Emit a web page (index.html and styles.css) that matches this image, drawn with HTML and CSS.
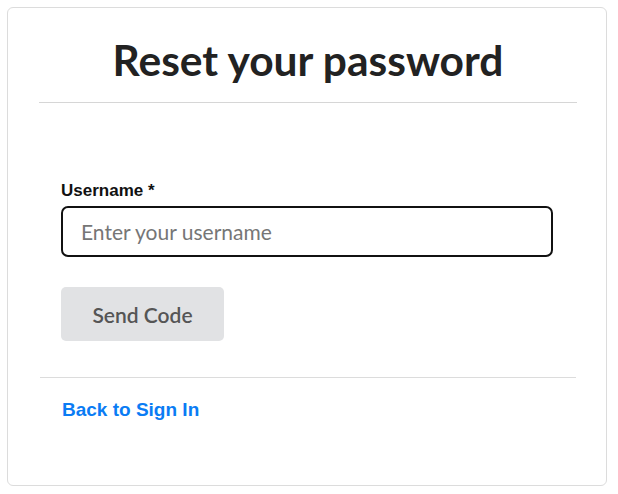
FILE: index.html
```html
<!DOCTYPE html>
<html lang="en">
<head>
<meta charset="utf-8">
<title>Reset your password</title>
<link rel="stylesheet" href="styles.css">
</head>
<body>
<div class="card">
  <div class="card-header">
    <h1 class="title">Reset your password</h1>
  </div>
  <form class="form">
    <label class="label" for="username">Username *</label>
    <input class="input" id="username" type="text" placeholder="Enter your username">
    <button class="button" type="button">Send Code</button>
  </form>
  <div class="card-footer">
    <a class="link" href="#">Back to Sign In</a>
  </div>
</div>
</body>
</html>
```
FILE: styles.css
```css
html, body {
  margin: 0;
  padding: 0;
  background: #ffffff;
}
body {
  padding: 7px;
}
.card {
  box-sizing: border-box;
  width: 600px;
  height: 479px;
  border: 1px solid #dcdcdc;
  border-radius: 6px;
  background: #fff;
  display: flex;
  flex-direction: column;
}
.card-header {
  margin: 0 29px 0 31px;
  padding-top: 28px;
  padding-bottom: 18px;
  border-bottom: 1px solid #d6d6d6;
}
.title {
  margin: 0;
  font-family: Lato, "Noto Sans", sans-serif;
  font-weight: 700;
  font-size: 42.5px;
  line-height: 48px;
  color: #222222;
  text-align: center;
}
.form {
  display: flex;
  flex-direction: column;
  align-items: flex-start;
  margin: 0 30px 0 32px;
  padding: 78px 22px 36px 21px;
  border-bottom: 1px solid #dcdcdc;
}
.label {
  font-family: "Liberation Sans", Arial, sans-serif;
  font-weight: 700;
  font-size: 17px;
  line-height: 20px;
  color: #111111;
}
.input {
  box-sizing: border-box;
  width: 492px;
  height: 51px;
  margin-top: 5px;
  padding: 0 18px;
  border: 2px solid #111111;
  border-radius: 7px;
  font-family: Lato, "Noto Sans", sans-serif;
  font-size: 21px;
  color: #222;
  background: #fff;
  outline: none;
}
.input::placeholder {
  color: #767676;
}
.button {
  box-sizing: border-box;
  width: 163px;
  height: 54px;
  margin-top: 30px;
  border: none;
  border-radius: 5px;
  background: #e1e2e4;
  font-family: Lato, "Noto Sans", sans-serif;
  font-weight: 600;
  font-size: 21px;
  color: #555555;
  padding: 0;
}
.card-footer {
  padding: 21px 0 0 54px;
}
.link {
  font-family: "Liberation Sans", Arial, sans-serif;
  font-weight: 700;
  font-size: 19px;
  line-height: 21px;
  color: #0a7cf4;
  text-decoration: none;
}
```
